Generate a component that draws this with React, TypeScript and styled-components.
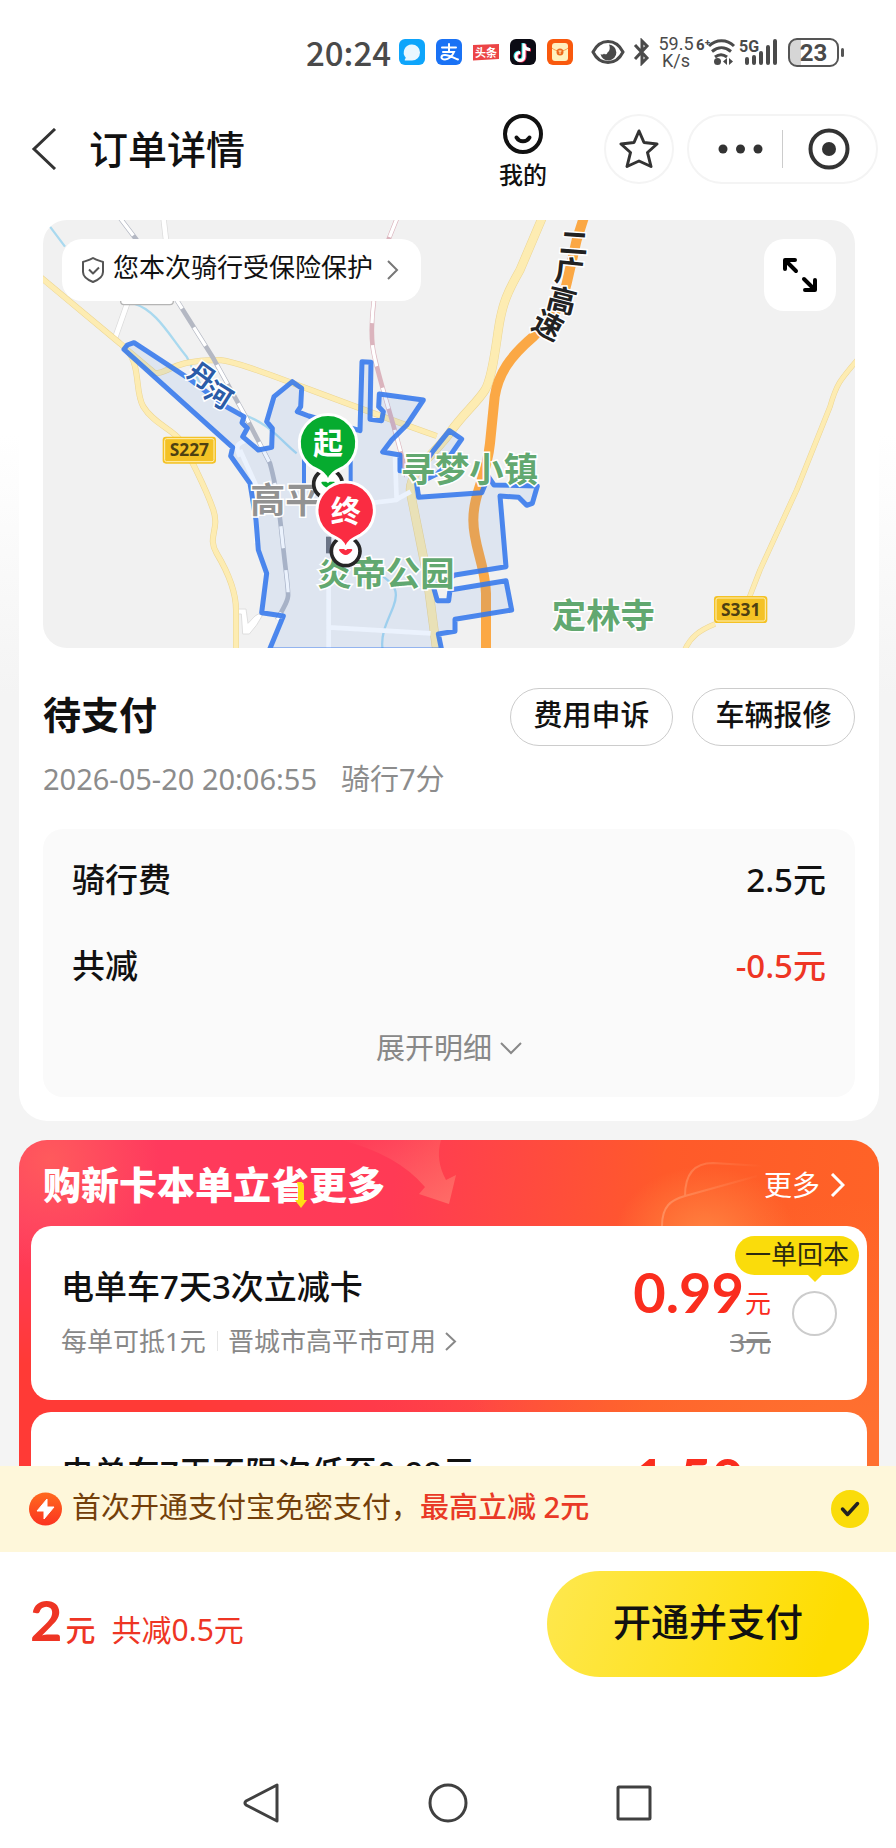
import React from "react";
import styled, { createGlobalStyle, css } from "styled-components";

const GlobalStyle = createGlobalStyle`
  *, *::before, *::after { box-sizing: border-box; }
  body {
    margin: 0;
    background: #fff;
    color: #111;
    font-family: "Noto Sans", "Noto Sans CJK SC", sans-serif;
    font-size: 29px;
    line-height: 40px;
    font-weight: 400;
  }
  button, input { font: inherit; color: inherit; }
  h1, h2, h3, p { margin: 0; font: inherit; }
  svg { display: block; flex: none; }
`;

const bareButton = css`
  border: 0;
  padding: 0;
  background: none;
  cursor: pointer;
`;

const Screen = styled.div`
  display: flex;
  flex-direction: column;
  height: 100vh;
  background: #fff;
`;

/* ---------- status bar ---------- */

const StatusBar = styled.div`
  display: flex;
  flex: none;
  align-items: center;
  justify-content: flex-end;
  height: 104px;
  padding-right: 57px;
  color: #4a4a4a;
`;

const Clock = styled.time`
  margin-right: 8px;
  font-size: 33px;
  font-weight: 500;
  font-family: "Noto Sans CJK SC", sans-serif;
`;

const AppIcons = styled.div`
  display: flex;
  gap: 11px;
  margin-right: 18px;
`;

const BluetoothMark = styled.svg`
  margin-left: 8px;
`;

const Speed = styled.div`
  width: 36px;
  margin: 0 2px 0 7px;
  font-family: Roboto, sans-serif;
  font-size: 18px;
  line-height: 17px;
  text-align: center;
`;

const Battery = styled.div`
  position: relative;
  width: 51px;
  height: 29px;
  margin-left: 8px;
  border: 2px solid #555;
  border-radius: 9px;
  background: linear-gradient(90deg, #d6d6d6 24%, #fff 24%);
  font-family: Roboto, sans-serif;
  font-size: 24px;
  font-weight: 700;
  line-height: 26px;
  text-align: center;

  &::after {
    content: "";
    position: absolute;
    top: 8px;
    right: -7px;
    width: 3px;
    height: 9px;
    border-radius: 2px;
    background: #555;
  }
`;

/* ---------- header ---------- */

const Header = styled.header`
  display: flex;
  flex: none;
  align-items: center;
  height: 90px;
  padding: 0 18px 0 30px;
`;

const IconButton = styled.button`
  ${bareButton}
  display: grid;
  place-items: center;
`;

const PageTitle = styled.h1`
  flex: 1;
  margin-left: 32px;
  font-size: 39px;
  font-weight: 500;
  line-height: 52px;
`;

const MineButton = styled.button`
  ${bareButton}
  display: grid;
  justify-items: center;
  gap: 2px;
  margin-right: 57px;
  padding-top: 8px;
  font-size: 24px;
  font-weight: 500;
  line-height: 36px;
`;

const StarButton = styled(IconButton)`
  width: 70px;
  height: 70px;
  margin-right: 13px;
  border: 2px solid #f4f4f4;
  border-radius: 35px;
`;

const Capsule = styled.div`
  display: flex;
  align-items: center;
  justify-content: space-between;
  width: 191px;
  height: 70px;
  padding: 0 26px 0 29px;
  border: 2px solid #f4f4f4;
  border-radius: 35px;
`;

const CapsuleRule = styled.span`
  width: 1px;
  height: 38px;
  margin-right: 7px;
  background: #ccc;
`;

/* ---------- scrolling body ---------- */

const Content = styled.main`
  flex: 1;
  min-height: 0;
  padding: 0 17px 0 19px;
  overflow-y: auto;
  scrollbar-width: none;
  background: linear-gradient(#fff 240px, #f4f4f4 500px);
`;

const OrderCard = styled.section`
  padding: 26px 24px 24px;
  border-radius: 0 0 28px 28px;
  background: #fff;
`;

const MapFrame = styled.div`
  position: relative;
  height: 428px;
  overflow: hidden;
  border-radius: 24px;
  background: #f1f1f1;
`;

const MapArt = styled.svg`
  width: 100%;
  height: 100%;
`;

const InsuranceButton = styled.button`
  ${bareButton}
  position: absolute;
  top: 19px;
  left: 19px;
  display: flex;
  align-items: center;
  height: 62px;
  padding: 0 22px 0 18px;
  border-radius: 20px;
  background: #fff;
  color: #777;
  font-size: 26px;
  line-height: 36px;

  span {
    margin: 0 13px 6px 7px;
    color: #111;
  }
`;

const ExpandButton = styled(IconButton)`
  position: absolute;
  top: 19px;
  right: 19px;
  width: 72px;
  height: 72px;
  border-radius: 20px;
  background: #fff;
`;

const OrderHead = styled.div`
  display: flex;
  align-items: center;
  gap: 19px;
  margin-top: 40px;
`;

const OrderState = styled.h2`
  flex: 1;
  padding-bottom: 6px;
  font-size: 38px;
  font-weight: 700;
  line-height: 52px;
`;

const PillButton = styled.button`
  ${bareButton}
  width: 163px;
  height: 58px;
  padding-bottom: 4px;
  border: 1px solid #ccc;
  border-radius: 29px;
  background: #fff;
  font-weight: 500;
`;

const RideMeta = styled.p`
  display: flex;
  gap: 24px;
  margin-top: 13px;
  color: #8c8c8c;
`;

const FeeBox = styled.div`
  margin-top: 30px;
  padding: 29px;
  border-radius: 20px;
  background: #fafafa;
`;

const FeeList = styled.dl`
  display: grid;
  gap: 42px;
  margin: 0;
`;

const FeeRow = styled.div<{ $discount?: boolean }>`
  display: flex;
  justify-content: space-between;
  font-size: 33px;
  font-weight: 500;
  line-height: 44px;

  dd {
    margin: 0;
    color: ${(p) => (p.$discount ? "#ee3524" : "inherit")};
  }
`;

const DetailToggle = styled.button`
  ${bareButton}
  display: flex;
  align-items: center;
  gap: 8px;
  margin: 40px auto 0;
  color: #888;
`;

/* ---------- promotion ---------- */

const Promo = styled.section`
  margin-top: 19px;
  padding: 0 12px 12px;
  border-radius: 28px;
  background:
    radial-gradient(ellipse 90px 70px at 686px 96px, #ff8240, transparent),
    radial-gradient(circle at 30px 20px, #ff5a5c, transparent 110px),
    radial-gradient(ellipse 480px 240px at 0 320px, #ff3a36 40%, transparent),
    radial-gradient(ellipse 420px 280px at 100% 340px, #ff7030 20%, transparent),
    linear-gradient(95deg, #ff3a62, #ff3a55 42%, #ff5a2a 72%, #ff6426);
`;

const PromoHead = styled.div`
  position: relative;
  display: flex;
  align-items: center;
  justify-content: space-between;
  height: 86px;
  padding: 0 22px 0 12px;
  color: #fff;
`;

const PromoArt = styled.svg`
  position: absolute;
  top: 0;
  left: 290px;
`;

const PromoTitle = styled.h2`
  position: relative;
  padding-top: 2px;
  font-size: 38px;
  font-weight: 900;
  line-height: 52px;
`;

const SaveMark = styled.span`
  position: relative;

  svg {
    position: absolute;
    right: 2px;
    bottom: 2px;
  }
`;

const MoreLink = styled.a`
  position: relative;
  display: flex;
  align-items: center;
  gap: 10px;
  padding-top: 4px;
  color: #fff;
  font-size: 28px;
  text-decoration: none;
`;

const DealList = styled.div`
  display: grid;
  gap: 12px;
`;

const Deal = styled.article`
  position: relative;
  display: flex;
  align-items: center;
  height: 174px;
  padding: 0 30px;
  border-radius: 20px;
  background: #fff;
`;

const DealText = styled.div`
  flex: 1;
  padding-bottom: 2px;
`;

const DealTitle = styled.label`
  display: block;
  font-size: 33px;
  font-weight: 500;
  line-height: 44px;
`;

const DealTerms = styled.p`
  display: flex;
  align-items: center;
  margin-top: 14px;
  color: #888;
  font-size: 26px;
  line-height: 36px;

  a {
    display: flex;
    align-items: center;
    gap: 8px;
    margin-left: 11px;
    padding-left: 11px;
    color: inherit;
    text-decoration: none;
    background: linear-gradient(#e6e6e6, #e6e6e6) left center / 1px 20px no-repeat;
  }
`;

const DealPrice = styled.div`
  margin-right: 21px;
  color: #fa2d1e;
  text-align: right;
`;

const Price = styled.p`
  font-size: 26px;
  line-height: 46px;
`;

const BigNumber = styled.b`
  margin-right: 1px;
  font-family: Lato, sans-serif;
  font-size: 56px;
  font-weight: 700;
`;

const OldPrice = styled.s`
  display: block;
  color: #888;
  font-size: 26px;
  line-height: 32px;
`;

const Radio = styled.input`
  appearance: none;
  flex: none;
  width: 45px;
  height: 45px;
  margin: 0;
  border: 2px solid #ccc;
  border-radius: 50%;
  background: #fff;

  &:checked { border: 12px solid #fadc0b; }
`;

const DealBadge = styled.span`
  position: absolute;
  top: 10px;
  right: 8px;
  height: 39px;
  padding: 0 10px;
  border-radius: 20px;
  background: #fadc0b;
  color: #2c2a10;
  font-size: 26px;
  line-height: 36px;

  &::after {
    content: "";
    position: absolute;
    top: 39px;
    right: 37px;
    border: 7px solid transparent;
    border-top-color: #fadc0b;
    border-bottom: 0;
  }
`;

/* ---------- pay area ---------- */

const QuickPay = styled.label`
  display: flex;
  flex: none;
  align-items: center;
  height: 86px;
  padding: 0 27px 0 29px;
  background: #fef7da;
  color: #74400a;
`;

const QuickPayText = styled.span`
  flex: 1;
  margin-left: 10px;
  padding-bottom: 4px;

  strong {
    color: #e93a26;
    font-weight: 500;
  }
`;

const CheckWrap = styled.span`
  position: relative;
  display: grid;
  place-items: center;

  svg {
    position: absolute;
    pointer-events: none;
  }
`;

const RoundCheck = styled.input`
  appearance: none;
  width: 38px;
  height: 38px;
  margin: 0;
  border: 2px solid #fadc0b;
  border-radius: 50%;

  &:checked { background: #fadc0b; }
`;

const PayBar = styled.footer`
  display: flex;
  flex: none;
  align-items: center;
  justify-content: space-between;
  height: 144px;
  padding: 0 27px 0 30px;
`;

const Total = styled.p`
  padding-top: 2px;
  color: #ee3524;
  font-size: 30px;
  line-height: 56px;

  span { margin-left: 16px; }
`;

const Unit = styled.em`
  margin-left: 2px;
  font-style: normal;
  font-weight: 500;
`;

const PayButton = styled.button`
  ${bareButton}
  width: 322px;
  height: 106px;
  padding-bottom: 6px;
  border-radius: 53px;
  background: linear-gradient(110deg, #fee84f, #fedd00 85%);
  font-size: 38px;
  font-weight: 500;
  line-height: 52px;
`;

const SystemNav = styled.nav`
  display: flex;
  flex: none;
  align-items: center;
  justify-content: center;
  gap: 146px;
  height: 152px;
  padding: 62px 0 0;
`;

/* ---------- small drawings ---------- */

const Chevron = ({ w, h, weight = 2 }: { w: number; h: number; weight?: number }) => (
  <svg width={w} height={h} fill="none" stroke="currentColor" strokeWidth={weight} aria-hidden="true">
    <path d={`M2 1 L${w - 2} ${h / 2} L2 ${h - 1}`} />
  </svg>
);

const StatusGlyphs = () => (
  <>
    <AppIcons>
      <svg width="26" height="26" viewBox="0 0 26 26">
        <rect width="26" height="26" rx="6" fill="#0ea5fb" />
        <path d="M13 5.500a8 8 0 0 1 0 16H6.500c-1 0-1-.7-.5-1.300l.8-1.400A8 8 0 0 1 13 5.500z" fill="#e9f7ff" />
      </svg>
      <svg width="26" height="26" viewBox="0 0 26 26" fill="none" stroke="#fff" strokeWidth="2" strokeLinecap="round">
        <rect width="26" height="26" rx="6" fill="#1a72f5" stroke="none" />
        <path d="M6 8.500h14M13 5v8M7 13h11c-1.500 4-5.500 7.500-9 7.500-5 0-4.500-4.500 0-4.500 4 0 8 2.500 13 4.500" />
      </svg>
      <svg width="26" height="26" viewBox="0 0 26 26">
        <path d="M0 6l26-1v15l-26 1.500z" fill="#ec4446" />
        <text x="13" y="18" fontSize="11" fontWeight="700" fill="#fff" textAnchor="middle">头条</text>
      </svg>
      <svg width="26" height="26" viewBox="0 0 26 26" fill="none" strokeWidth="3">
        <rect width="26" height="26" rx="6" fill="#0b0b14" />
        <path d="M13 4v13a4 4 0 1 1-4-4M13 5c.5 3.500 3 5 6 5" stroke="#2de2e6" />
        <path d="M15 5v13a4 4 0 1 1-4-4M15 6c.5 3.500 3 5 6 5" stroke="#f7335c" />
        <path d="M14 4.500v13a4 4 0 1 1-4-4M14 5.500c.5 3.500 3 5 6 5" stroke="#fff" />
      </svg>
      <svg width="26" height="26" viewBox="0 0 26 26" fill="none">
        <rect width="26" height="26" rx="6" fill="#f9590d" />
        <rect x="5" y="4" width="16" height="18" rx="3" fill="#fff0bd" />
        <path d="M5 9c4 4 12 4 16 0" stroke="#f3a04a" />
        <circle cx="13" cy="13" r="3.500" fill="#ee6a1c" />
        <path d="M11.500 12h3M13 12v3" stroke="#fff0bd" />
      </svg>
    </AppIcons>
    <svg width="34" height="26" viewBox="0 0 34 26" fill="none" stroke="#4a4a4a" strokeWidth="3">
      <path d="M2 13C9-1 25-1 32 13 25 27 9 27 2 13z" />
      <path d="M18 5.500a8 8 0 1 1-8.500 9.500c1.500 1 3 .5 3.500-.5 1 1.500 3 1 3.500-1 2-1 3-4.500 1.500-8z" fill="#4a4a4a" stroke="none" />
    </svg>
    <BluetoothMark width="18" height="28" viewBox="0 0 18 28" fill="none" stroke="#4a4a4a" strokeWidth="3">
      <path d="M2 7l12 13-5 5V3l5 5L2 21" />
    </BluetoothMark>
    <Speed>59.5 K/s</Speed>
    <svg width="84" height="30" viewBox="0 0 84 30" fill="none" stroke="#4a4a4a" strokeWidth="3" fontFamily="Roboto" fontWeight="700">
      <text x="0" y="13" fontSize="15" fill="#4a4a4a" stroke="none">6⁺</text>
      <path d="M13 9c7-7 18-7 25 0M16 14.500c6-5 13-5 19 0M19 20c4-3 8-3 12 0" />
      <circle cx="21.500" cy="24.500" r="3.500" fill="#4a4a4a" stroke="none" />
      <path d="M31 21v7l-4-3.500zM33 21v7l4-3.500z" fill="#4a4a4a" stroke="none" />
      <text x="43" y="15" fontSize="16" fill="#4a4a4a" stroke="none">5G</text>
      <g strokeLinecap="round" strokeWidth="4">
        <path d="M51 22v4M58 20v6M65 16v10M72 10v16M79 4v22" />
      </g>
    </svg>
    <Battery>23</Battery>
  </>
);

const Shield = () => (
  <svg width="26" height="28" viewBox="0 0 26 28" fill="none" stroke="#555" strokeWidth="2" strokeLinejoin="round" aria-hidden="true">
    <path d="M13 2C10 4 6 5 3 6v10c0 5 5 8 10 10 5-2 10-5 10-10V6c-3-1-7-2-10-4z" />
    <path d="M9 13.500l4 4 6-6" />
  </svg>
);

/* ---------- city map ---------- */

const zone =
  "M688 1320L730 1218 665 1208 680 1090 655 1020 648 930 635 850 630 820 572 738 578 712 252 418 262 405 282 398 450 508 550 585 612 620 606 638 622 655 608 680 655 720 695 712 697 655 680 635 702 560 757 515 785 535 782 590 772 605 806 618 960 662 966 455 993 457 990 628 1025 632 1030 605 1016 590 1018 552 1150 570 1100 645 1055 690 1028 726 1080 735 1080 782 1140 782 1180 722 1228 662 1265 687 1235 730 1195 790 1130 822 1136 862 1325 848 1345 800 1362 825 1492 828 1477 880 1460 886 1436 862 1380 858 1398 1070 1245 1095 1180 1130 1192 1172 1226 1172 1230 1140 1398 1112 1415 1200 1245 1228 1245 1264 1195 1272 1205 1320z";

const countryRoads = [
  { d: "M0 200L240 400C310 450 280 540 310 590S400 660 420 690 500 840 520 900 500 980 530 1030 588 1140 588 1200V1320", w: 15 },
  { d: "M262 420L345 490C390 490 390 450 540 450 620 460 760 525 1190 678", w: 15 },
  { d: "M1508 20L1440 180C1400 250 1390 280 1380 330S1360 500 1335 540 1270 610 1228 670 1100 790 1112 850 1150 1040 1160 1090L1190 1320", w: 24 },
  { d: "M2460 440C2400 510 2390 520 2370 590L2270 840 2160 1080 2125 1170M2025 1242C1980 1260 1950 1280 1932 1325", w: 13 },
];

const rails = [
  { d: "M240 24L290 90 410 270 520 445 620 625 690 760C715 850 720 930 735 1060S750 1150 712 1230", c: "#b4b8c3" },
  { d: "M1073 20L1045 90C1000 220 990 340 998 410S1070 660 1100 800", c: "#dbb4bd" },
];

const mapLabels = [
  { t: "丹", x: 487, y: 496, r: 36, s: 80, c: "#2b5ca8" },
  { t: "河", x: 537, y: 554, r: 32, s: 80, c: "#2b5ca8" },
  { t: "二", x: 1602, y: 97, r: 4, s: 86, c: "#222" },
  { t: "广", x: 1588, y: 182, r: 6, s: 88, c: "#222" },
  { t: "高", x: 1566, y: 270, r: 14, s: 88, c: "#222" },
  { t: "速", x: 1524, y: 345, r: 28, s: 88, c: "#222" },
  { t: "高平", x: 736, y: 868, r: 0, s: 105, c: "#929292" },
  { t: "寻梦小镇", x: 1288, y: 778, r: 0, s: 103, c: "#62a870" },
  { t: "炎帝公园", x: 1038, y: 1090, r: 0, s: 103, c: "#62a870" },
  { t: "定林寺", x: 1690, y: 1216, r: 0, s: 103, c: "#62a870" },
];

const RoadShield = ({ x, y, name }: { x: number; y: number; name: string }) => (
  <g transform={`translate(${x} ${y})`}>
    <rect width="160" height="81" rx="10" fill="#f4c225" />
    <rect x="6" y="6" width="148" height="69" rx="6" fill="none" stroke="#fff0b8" strokeWidth="3" />
    <text x="80" y="59" textAnchor="middle" fontSize="52" fontWeight="700" fontFamily="Noto Sans" fill="#4d4012">
      {name}
    </text>
  </g>
);

const Pin = ({ x, y, color, name }: { x: number; y: number; color: string; name: string }) => (
  <g transform={`translate(${x} ${y})`}>
    <circle cy="122" r="43" fill="#fff" stroke="#262626" strokeWidth="11" />
    <path d="M-17 118Q0 142 17 118z" fill={color} stroke={color} strokeWidth="6" strokeLinejoin="round" />
    <path
      d="M0 114C-8 88-28 82-45 73A86 86 0 1 1 45 73C28 82 8 88 0 114z"
      fill={color}
      stroke="#fff"
      strokeWidth="9"
      strokeLinejoin="round"
    />
    <text y="33" textAnchor="middle" fontSize="90" fontWeight="700" fill="#fff">
      {name}
    </text>
  </g>
);

const CityMap = () => (
  <MapArt viewBox="9 30 2436 1284" preserveAspectRatio="xMidYMid slice" role="img" aria-label="骑行路线地图">
    <g fill="none" strokeLinejoin="round">
      <g stroke="#a9d9ef" strokeWidth="7">
        <path d="M30 50L75 110M280 280C350 300 390 380 440 440L480 520" />
        <path d="M600 610C690 640 720 690 770 730M1030 1100C1070 1130 1075 1150 1060 1190S1020 1270 1028 1320" />
      </g>
      <g stroke="#dadada" strokeWidth="18">
        <path d="M370 20L378 90M262 280L225 385" />
      </g>
      <g stroke="#fff" strokeWidth="14">
        <path d="M370 20L378 90M262 280L225 385" />
      </g>
      <path d="M594 1197H618L624 1240 645 1218 655 1212 668 1215 650 1245 628 1272 608 1272 604 1212H594z" fill="#fff" stroke="#dedede" strokeWidth="3" />
      {countryRoads.map((r) => (
        <g key={r.d}>
          <path d={r.d} stroke="#ecd592" strokeWidth={r.w + 3} />
          <path d={r.d} stroke="#fdecb2" strokeWidth={r.w} />
        </g>
      ))}
      <path
        d="M1634 15L1610 90 1580 220C1560 310 1520 340 1480 380 1410 440 1375 490 1364 560L1350 700C1340 800 1300 850 1300 930S1335 1060 1338 1150V1320"
        stroke="#fba845"
        strokeWidth="30"
      />
      {rails.map((r) => (
        <g key={r.d}>
          <path d={r.d} stroke={r.c} strokeWidth="14" />
          <path d={r.d} stroke="#fff" strokeWidth="10" strokeDasharray="66 66" />
        </g>
      ))}
      <g stroke="#fff" strokeWidth="14">
        <path d="M1065 740L1070 870 950 884M1070 868L1112 845M866 1060V1320M866 1252L1172 1270M600 740C580 700 600 700 620 690M600 720L650 830V1000" />
      </g>
      <rect x="242" y="240" width="158" height="44" rx="10" fill="#fff" stroke="#b5b5b5" strokeWidth="4" />
      <path d={zone} fill="#3f80f0" fillOpacity="0.1" stroke="#3478ec" strokeOpacity="0.88" strokeWidth="15" />
      <path d="M792 745H932V850H835L792 826z" fill="#f1f1f1" stroke="#3478ec" strokeOpacity="0.88" strokeWidth="12" />
      <path d="M866 980V1030" stroke="#6c7587" strokeWidth="16" />
    </g>
    {mapLabels.map((l) => (
      <text
        key={l.t}
        transform={`translate(${l.x} ${l.y}) rotate(${l.r})`}
        y={l.s * 0.38}
        textAnchor="middle"
        fontSize={l.s}
        fontWeight="700"
        fill={l.c}
        stroke="#fff"
        strokeWidth="9"
        paintOrder="stroke"
      >
        {l.t}
      </text>
    ))}
    <RoadShield x={368} y={680} name="S227" />
    <RoadShield x={2022} y={1158} name="S331" />
    <Pin x={864} y={700} color="#06ab2f" name="起" />
    <Pin x={917} y={902} color="#fa2c42" name="终" />
  </MapArt>
);

/* ---------- data ---------- */

const fees = [
  { name: "骑行费", value: "2.5元" },
  { name: "共减", value: "-0.5元", discount: true },
];

const deals = [
  { id: "deal-3", title: "电单车7天3次立减卡", off: "每单可抵1元", area: "晋城市高平市可用", price: "0.99", old: "3元", badge: "一单回本" },
  { id: "deal-7", title: "电单车7天不限次低至0.99元", off: "每单可抵1元", area: "晋城市高平市可用", price: "1.50", old: "3元" },
];

export default function App() {
  return (
    <Screen>
      <GlobalStyle />
      <StatusBar>
        <Clock>20:24</Clock>
        <StatusGlyphs />
      </StatusBar>

      <Header>
        <IconButton aria-label="返回">
          <svg width="27" height="42" viewBox="0 0 27 42" fill="none" stroke="#333" strokeWidth="3">
            <path d="M25 1L4 21l21 20" />
          </svg>
        </IconButton>
        <PageTitle>订单详情</PageTitle>
        <MineButton>
          <svg width="42" height="42" viewBox="0 0 42 42" fill="none" stroke="#111" strokeWidth="4" strokeLinecap="round">
            <circle cx="21" cy="21" r="18" />
            <path d="M14.500 24.500c3 5 10 5 13 0" />
          </svg>
          我的
        </MineButton>
        <StarButton aria-label="收藏">
          <svg width="40" height="40" viewBox="0 0 40 40" fill="none" stroke="#333" strokeWidth="3" strokeLinejoin="round">
            <path d="M20 2l5 11.500 13 1.500-9.500 8.500 3.500 14L20 32 8 37.500l3.500-14L2 15l13-1.500z" />
          </svg>
        </StarButton>
        <Capsule>
          <IconButton aria-label="更多操作">
            <svg width="46" height="12" fill="#333">
              <circle cx="5" cy="6" r="4.500" />
              <circle cx="22.500" cy="6" r="4.500" />
              <circle cx="40" cy="6" r="4.500" />
            </svg>
          </IconButton>
          <CapsuleRule />
          <IconButton aria-label="关闭">
            <svg width="42" height="42" fill="none">
              <circle cx="21" cy="21" r="18.500" stroke="#333" strokeWidth="4" />
              <circle cx="21" cy="21" r="7" fill="#333" />
            </svg>
          </IconButton>
        </Capsule>
      </Header>

      <Content>
        <OrderCard>
          <MapFrame>
            <CityMap />
            <InsuranceButton>
              <Shield />
              <span>您本次骑行受保险保护</span>
              <Chevron w={13} h={20} />
            </InsuranceButton>
            <ExpandButton aria-label="展开地图">
              <svg width="36" height="36" viewBox="0 0 36 36" fill="none" stroke="#000" strokeWidth="4" strokeLinecap="round" strokeLinejoin="round">
                <path d="M3 12V3h10M4 4l10 10M23 33h10V23M32 32L22 22" />
              </svg>
            </ExpandButton>
          </MapFrame>

          <OrderHead>
            <OrderState>待支付</OrderState>
            <PillButton>费用申诉</PillButton>
            <PillButton>车辆报修</PillButton>
          </OrderHead>
          <RideMeta>
            <time>2026-05-20 20:06:55</time>
            <span>骑行7分</span>
          </RideMeta>

          <FeeBox>
            <FeeList>
              {fees.map((f) => (
                <FeeRow key={f.name} $discount={f.discount}>
                  <dt>{f.name}</dt>
                  <dd>{f.value}</dd>
                </FeeRow>
              ))}
            </FeeList>
            <DetailToggle>
              展开明细
              <svg width="22" height="14" fill="none" stroke="currentColor" strokeWidth="2">
                <path d="M1 2l10 10L21 2" />
              </svg>
            </DetailToggle>
          </FeeBox>
        </OrderCard>

        <Promo>
          <PromoHead>
            <PromoArt width="520" height="86" viewBox="0 0 520 86" fill="none" aria-hidden="true">
              <defs>
                <linearGradient id="swoosh" x1="0" y1="0" x2="1" y2="1">
                  <stop offset="0" stopColor="#ff8a7a" stopOpacity="0" />
                  <stop offset="1" stopColor="#ff8a7a" stopOpacity="0.6" />
                </linearGradient>
                <linearGradient id="ticket" x1="0" y1="0" x2="1" y2="0">
                  <stop offset="0" stopColor="#ffa478" stopOpacity="0.6" />
                  <stop offset="1" stopColor="#ffa478" stopOpacity="0" />
                </linearGradient>
              </defs>
              <path d="M20 0Q76 14 104 47L98 54 128 64 135 35 125 40Q114 20 120 0z" fill="url(#swoosh)" />
              <path d="M364 56C364 34 374 23 392 23L442 26M341 86C341 66 350 60 364 56L436 36" stroke="url(#ticket)" strokeWidth="2" />
            </PromoArt>
            <PromoTitle>
              购新卡本单立
              <SaveMark>
                省
                <svg width="12" height="26" viewBox="0 0 12 26" fill="#ffdf14" aria-hidden="true">
                  <path d="M2 0h5l2 4v14h3l-6 8-6-8h3V5z" />
                </svg>
              </SaveMark>
              更多
            </PromoTitle>
            <MoreLink href="#more">
              更多
              <Chevron w={15} h={24} weight={3} />
            </MoreLink>
          </PromoHead>
          <DealList>
            {deals.map((d) => (
              <Deal key={d.id}>
                <DealText>
                  <DealTitle htmlFor={d.id}>{d.title}</DealTitle>
                  <DealTerms>
                    {d.off}
                    <a href="#area">
                      {d.area}
                      <Chevron w={13} h={19} />
                    </a>
                  </DealTerms>
                </DealText>
                <DealPrice>
                  <Price>
                    <BigNumber>{d.price}</BigNumber>元
                  </Price>
                  <OldPrice>{d.old}</OldPrice>
                </DealPrice>
                <Radio type="radio" name="deal" id={d.id} />
                {d.badge && <DealBadge>{d.badge}</DealBadge>}
              </Deal>
            ))}
          </DealList>
        </Promo>
      </Content>

      <QuickPay>
        <svg width="33" height="34" viewBox="0 0 33 34" aria-hidden="true">
          <defs>
            <linearGradient id="bolt" x1="0" y1="0" x2="0" y2="1">
              <stop offset="0" stopColor="#ff6a1e" />
              <stop offset="1" stopColor="#fb3320" />
            </linearGradient>
          </defs>
          <circle cx="16.500" cy="17" r="16.500" fill="url(#bolt)" />
          <path d="M18 7L8 19h7v8l10-12h-7z" fill="#fff" stroke="#fff" strokeLinejoin="round" />
        </svg>
        <QuickPayText>
          首次开通支付宝免密支付，<strong>最高立减 2元</strong>
        </QuickPayText>
        <CheckWrap>
          <RoundCheck type="checkbox" defaultChecked />
          <svg width="20" height="16" fill="none" stroke="#222" strokeWidth="3.500" strokeLinecap="round" strokeLinejoin="round">
            <path d="M2.500 8l5 5.500 10-11" />
          </svg>
        </CheckWrap>
      </QuickPay>

      <PayBar>
        <Total>
          <BigNumber>2</BigNumber>
          <Unit>元</Unit>
          <span>共减0.5元</span>
        </Total>
        <PayButton>开通并支付</PayButton>
      </PayBar>

      <SystemNav>
        <IconButton aria-label="后退">
          <svg width="40" height="42" viewBox="0 0 40 42" fill="none" stroke="#404040" strokeWidth="3" strokeLinejoin="round">
            <path d="M35 3v36L4 23q-2-2 0-4z" />
          </svg>
        </IconButton>
        <IconButton aria-label="主屏幕">
          <svg width="40" height="40" fill="none" stroke="#404040" strokeWidth="3">
            <circle cx="20" cy="20" r="18" />
          </svg>
        </IconButton>
        <IconButton aria-label="最近任务">
          <svg width="40" height="40" fill="none" stroke="#404040" strokeWidth="3">
            <rect x="4" y="4" width="32" height="32" rx="1" />
          </svg>
        </IconButton>
      </SystemNav>
    </Screen>
  );
}
